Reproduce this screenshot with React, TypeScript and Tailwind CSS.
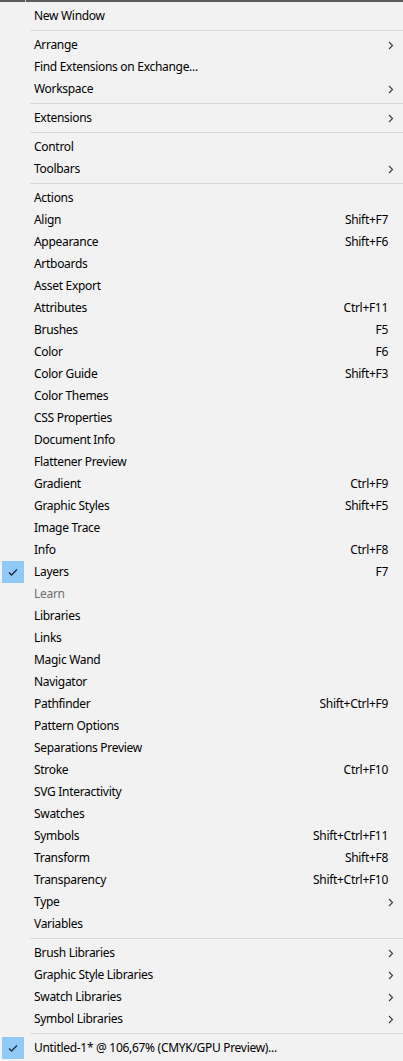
import React from 'react';

type Item =
  | { sep: true }
  | {
      sep?: false;
      label: string;
      shortcut?: string;
      sub?: boolean;
      checked?: boolean;
      disabled?: boolean;
    };

const items: Item[] = [
  { label: 'New Window' },
  { sep: true },
  { label: 'Arrange', sub: true },
  { label: 'Find Extensions on Exchange...' },
  { label: 'Workspace', sub: true },
  { sep: true },
  { label: 'Extensions', sub: true },
  { sep: true },
  { label: 'Control' },
  { label: 'Toolbars', sub: true },
  { sep: true },
  { label: 'Actions' },
  { label: 'Align', shortcut: 'Shift+F7' },
  { label: 'Appearance', shortcut: 'Shift+F6' },
  { label: 'Artboards' },
  { label: 'Asset Export' },
  { label: 'Attributes', shortcut: 'Ctrl+F11' },
  { label: 'Brushes', shortcut: 'F5' },
  { label: 'Color', shortcut: 'F6' },
  { label: 'Color Guide', shortcut: 'Shift+F3' },
  { label: 'Color Themes' },
  { label: 'CSS Properties' },
  { label: 'Document Info' },
  { label: 'Flattener Preview' },
  { label: 'Gradient', shortcut: 'Ctrl+F9' },
  { label: 'Graphic Styles', shortcut: 'Shift+F5' },
  { label: 'Image Trace' },
  { label: 'Info', shortcut: 'Ctrl+F8' },
  { label: 'Layers', shortcut: 'F7', checked: true },
  { label: 'Learn', disabled: true },
  { label: 'Libraries' },
  { label: 'Links' },
  { label: 'Magic Wand' },
  { label: 'Navigator' },
  { label: 'Pathfinder', shortcut: 'Shift+Ctrl+F9' },
  { label: 'Pattern Options' },
  { label: 'Separations Preview' },
  { label: 'Stroke', shortcut: 'Ctrl+F10' },
  { label: 'SVG Interactivity' },
  { label: 'Swatches' },
  { label: 'Symbols', shortcut: 'Shift+Ctrl+F11' },
  { label: 'Transform', shortcut: 'Shift+F8' },
  { label: 'Transparency', shortcut: 'Shift+Ctrl+F10' },
  { label: 'Type', sub: true },
  { label: 'Variables' },
  { sep: true },
  { label: 'Brush Libraries', sub: true },
  { label: 'Graphic Style Libraries', sub: true },
  { label: 'Swatch Libraries', sub: true },
  { label: 'Symbol Libraries', sub: true },
  { sep: true },
  { label: 'Untitled-1* @ 106,67% (CMYK/GPU Preview)...', checked: true },
];

const Check = () => (
  <svg width="22" height="22" viewBox="0 0 22 22" aria-hidden="true">
    <path d="M7 11.5 L9.5 14 L15 8.5" fill="none" stroke="#1f2a36" strokeWidth="1.3" />
  </svg>
);

const Chevron = () => (
  <svg width="6" height="9" viewBox="0 0 6 9" aria-hidden="true">
    <path d="M1 1 L4.5 4.5 L1 8" fill="none" stroke="#3a3a3a" strokeWidth="1.1" />
  </svg>
);

export default function App() {
  return (
    <div
      className="flex h-[1061px] w-[403px] flex-col bg-[#f2f2f2] text-[12px] tracking-[-0.3px] text-black"
      style={{ fontFamily: '"Segoe UI", "Noto Sans", "Liberation Sans", sans-serif' }}
    >
      {/* title bar edge */}
      <div className="flex h-[2px] gap-px bg-[#cfcfcf]">
        <div className="w-[25px] bg-[#5b5b5b]" />
        <div className="flex-1 bg-[#5b5b5b]" />
      </div>
      <div className="flex flex-col pt-[3px]">
        {items.map((item, i) =>
          item.sep ? (
            <div key={i} className="flex h-[7px] items-center pl-[30px]">
              <div className="h-px w-full bg-[#d7d7d7]" />
            </div>
          ) : (
            <div key={i} className="flex h-[22px] items-center pl-[2px] pr-[6px]">
              <div className="flex h-[22px] w-[22px] items-center justify-center">
                {item.checked && (
                  <div className="h-[22px] w-[22px] bg-[#91c9f7]">
                    <Check />
                  </div>
                )}
              </div>
              <span
                className={`ml-[10px] flex-1 whitespace-nowrap ${
                  item.disabled ? 'text-[#6d6d6d]' : ''
                }`}
              >
                {item.label}
              </span>
              {item.shortcut && <span className="mr-[9px] whitespace-nowrap">{item.shortcut}</span>}
              {item.sub && (
                <span className="flex w-[9px] justify-start">
                  <Chevron />
                </span>
              )}
            </div>
          ),
        )}
      </div>
    </div>
  );
}
